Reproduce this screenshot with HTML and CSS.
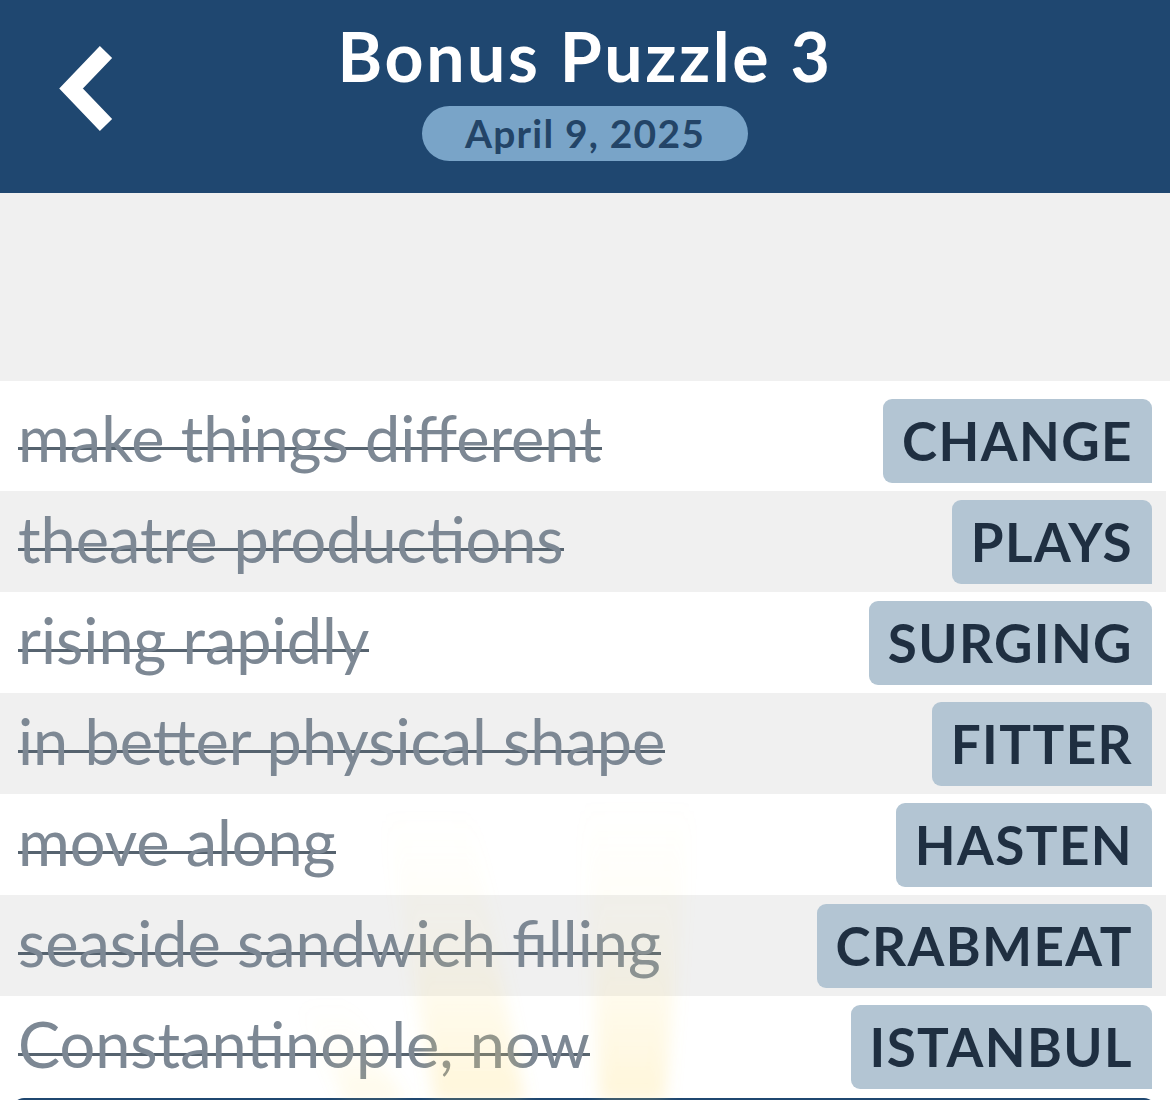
FILE: index.html
```html
<!DOCTYPE html>
<html lang="en">
<head>
<meta charset="utf-8">
<title>Bonus Puzzle 3</title>
<link rel="stylesheet" href="styles.css">
</head>
<body>
<div class="screen">
  <header class="topbar">
    <svg class="back" viewBox="0 0 120 193" width="120" height="193" aria-label="Back">
      <polyline points="106,52 71,88.5 106,125" fill="none" stroke="#ffffff" stroke-width="17" stroke-linejoin="miter" stroke-linecap="butt"/>
    </svg>
    <div class="titles">
      <h1 class="title">Bonus Puzzle 3</h1>
      <div class="date">April 9, 2025</div>
    </div>
    <div class="spacer-col"></div>
  </header>

  <div class="gap-area"></div>

  <main class="list">
    <div class="row"><span class="clue">make things different</span><span class="answer">CHANGE</span></div>
    <div class="row alt"><span class="clue">theatre productions</span><span class="answer">PLAYS</span></div>
    <div class="row"><span class="clue">rising rapidly</span><span class="answer">SURGING</span></div>
    <div class="row alt"><span class="clue">in better physical shape</span><span class="answer">FITTER</span></div>
    <div class="row"><span class="clue">move along</span><span class="answer">HASTEN</span></div>
    <div class="row alt"><span class="clue">seaside sandwich filling</span><span class="answer">CRABMEAT</span></div>
    <div class="row"><span class="clue">Constantinople, now</span><span class="answer">ISTANBUL</span></div>
    <svg class="rays" viewBox="0 0 1170 720" preserveAspectRatio="none" aria-hidden="true">
      <defs>
        <linearGradient id="rayfade" x1="0" y1="0" x2="0" y2="1">
          <stop offset="0" stop-color="#ffe38a" stop-opacity="0"/>
          <stop offset="0.45" stop-color="#ffe38a" stop-opacity="0.08"/>
          <stop offset="1" stop-color="#ffd860" stop-opacity="0.24"/>
        </linearGradient>
        <filter id="soft" x="-20%" y="-20%" width="140%" height="140%">
          <feGaussianBlur stdDeviation="8"/>
        </filter>
      </defs>
      <g filter="url(#soft)">
        <polygon points="385,430 470,430 525,720 435,720" fill="url(#rayfade)"/>
        <polygon points="585,420 690,420 665,720 600,720" fill="url(#rayfade)"/>
        <polygon points="300,620 345,620 405,720 345,720" fill="url(#rayfade)" opacity="0.6"/>
      </g>
    </svg>
  </main>

  <div class="footer-bar"></div>
</div>
</body>
</html>
```

FILE: styles.css
```css
* {
  box-sizing: border-box;
}

html, body {
  margin: 0;
  padding: 0;
  background: #ffffff;
}

body {
  font-family: "Lato", "Open Sans", "Liberation Sans", sans-serif;
  overflow: hidden;
}

.screen {
  width: 1170px;
  display: flex;
  flex-direction: column;
}

.topbar {
  height: 193px;
  background: #1f4770;
  display: grid;
  grid-template-columns: 120px 1fr 120px;
}

.back {
  display: block;
}

.titles {
  display: flex;
  flex-direction: column;
  align-items: center;
  padding-top: 22px;
  gap: 16px;
}

.title {
  margin: 0;
  font-size: 68px;
  line-height: 68px;
  font-weight: 700;
  color: #ffffff;
  letter-spacing: 2.6px;
}

.date {
  height: 55px;
  line-height: 55px;
  padding: 0 43px;
  border-radius: 28px;
  background: #79a4c8;
  color: #234467;
  font-size: 39px;
  font-weight: 700;
  letter-spacing: 1.2px;
}

.gap-area {
  height: 188px;
  background: #f0f0f0;
}

.list {
  position: relative;
  padding-top: 9px;
  background: #ffffff;
}

.row {
  height: 101px;
  margin-right: 4px;
  display: flex;
  align-items: center;
  justify-content: space-between;
  padding: 0 14px 0 18px;
  background: #ffffff;
}

.row.alt {
  background: #f0f0f0;
}

.clue {
  font-size: 63px;
  line-height: 76px;
  color: #7d8894;
  padding-bottom: 6px;
  background-image: linear-gradient(#56636f, #56636f);
  background-repeat: no-repeat;
  background-size: 100% 3px;
  background-position: 0 47px;
  white-space: nowrap;
}

.answer {
  height: 84px;
  line-height: 84px;
  padding: 0 19px;
  border-radius: 9px 9px 0 9px;
  background: #b3c5d3;
  color: #1f2f41;
  font-size: 53px;
  font-weight: 700;
  letter-spacing: 1.4px;
}

.rays {
  position: absolute;
  left: 0;
  top: 0;
  width: 1170px;
  height: 720px;
  pointer-events: none;
}

.footer-bar {
  height: 60px;
  margin: 1px 14px 0 12px;
  border-radius: 12px 12px 0 0;
  background: #1f4770;
}
```
